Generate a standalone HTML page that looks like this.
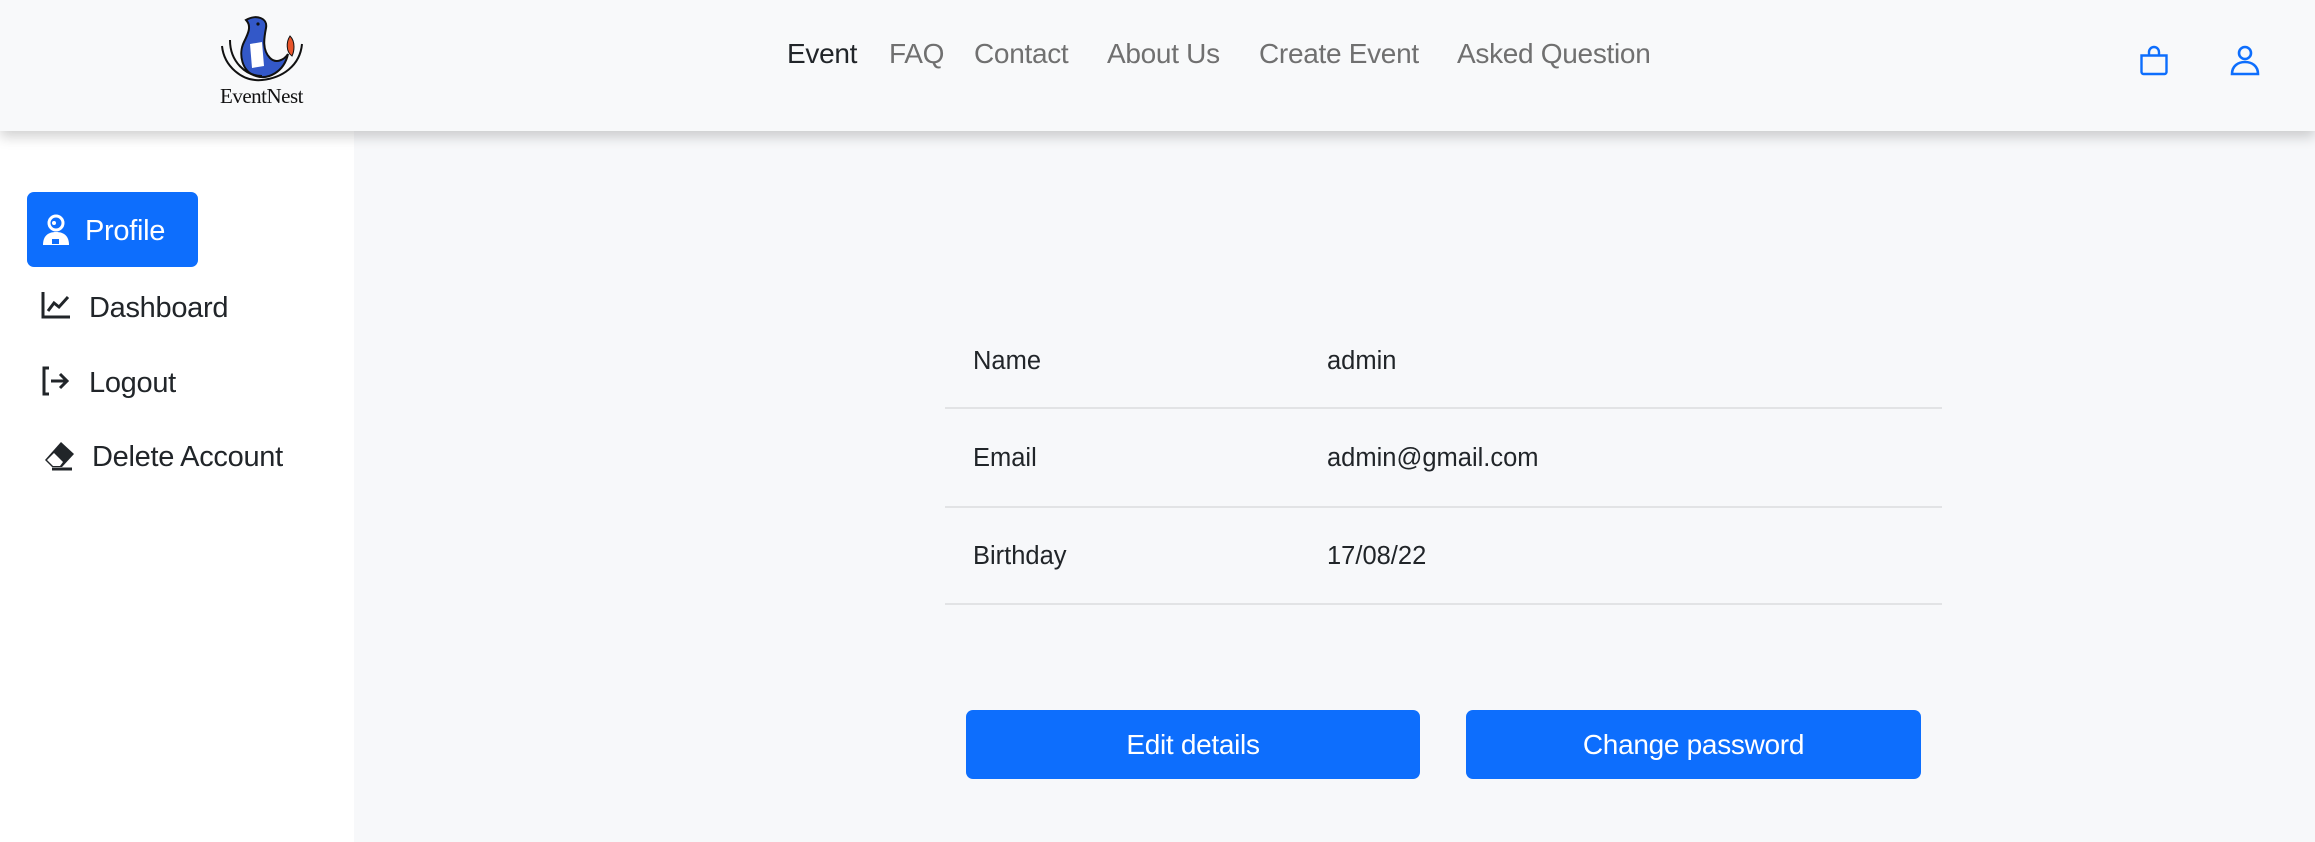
<!DOCTYPE html>
<html><head><meta charset="utf-8"><style>
*{margin:0;padding:0;box-sizing:border-box}
body{width:2315px;height:842px;overflow:hidden;background:#f7f8fa;font-family:"Liberation Sans",sans-serif;position:relative}
.hdr{position:absolute;left:0;top:0;width:2315px;height:131px;background:#f8f9fa;box-shadow:0 6px 12px rgba(0,0,0,.18);z-index:2}
.side{position:absolute;left:0;top:131px;width:354px;height:711px;background:#fff}
.a{position:absolute;white-space:nowrap}
.nav{font-size:28px;color:#707070;top:38px;letter-spacing:-0.3px}
.sl{font-size:29px;color:#212529;letter-spacing:-0.3px}
.td{font-size:25.5px;color:#212529}
.line{position:absolute;left:945px;width:997px;height:2px;background:#e2e3e5}
.btn{position:absolute;top:710px;height:69px;background:#0d6efd;border-radius:7px;color:#fff;font-size:28px;display:flex;align-items:center;justify-content:center;letter-spacing:-0.3px}
</style></head><body>
<div class="hdr">
<svg class="a" style="left:218px;top:14px" width="88" height="72" viewBox="0 0 88 72">
<path d="M28 6 C38 0 50 4 48 14 C46 24 44 36 52 44 C58 50 66 46 70 40 C66 58 50 66 38 62 C24 58 20 40 26 28 C30 20 34 12 28 6Z" fill="#3358c8" stroke="#111" stroke-width="2"/>
<path d="M32 30 L44 28 L46 52 L34 54Z" fill="#fff"/>
<circle cx="40" cy="10" r="1.6" fill="#111"/>
<path d="M72 22 C78 28 76 38 74 42 C68 38 68 28 72 22Z" fill="#e8542a" stroke="#111" stroke-width="1"/>
<path d="M4 32 C6 52 24 68 44 66 C64 64 82 52 84 30" fill="none" stroke="#111" stroke-width="2"/>
<path d="M12 26 C12 48 28 62 44 62" fill="none" stroke="#111" stroke-width="2"/>
</svg>
<div class="a" style="left:220px;top:84px;font-family:'Liberation Serif',serif;font-size:21px;color:#111;letter-spacing:-0.5px">EventNest</div>
<div class="a nav" style="left:787px;color:#212529">Event</div>
<div class="a nav" style="left:889px">FAQ</div>
<div class="a nav" style="left:974px">Contact</div>
<div class="a nav" style="left:1107px">About Us</div>
<div class="a nav" style="left:1259px">Create Event</div>
<div class="a nav" style="left:1457px">Asked Question</div>
<svg class="a" style="left:2139px;top:45px" width="30" height="31" viewBox="0 0 30 31"><path d="M10 10 V7 a5 5 0 0 1 10 0 V10 M2.5 10.5 H27.5 V27 a2 2 0 0 1 -2 2 H4.5 a2 2 0 0 1 -2 -2Z" fill="none" stroke="#0d6efd" stroke-width="2.4"/></svg>
<svg class="a" style="left:2230px;top:45px" width="30" height="31" viewBox="0 0 30 31"><circle cx="15" cy="8" r="6" fill="none" stroke="#0d6efd" stroke-width="2.6"/><path d="M2 29 C2 21 8 17 15 17 C22 17 28 21 28 29Z" fill="none" stroke="#0d6efd" stroke-width="2.6"/></svg>
</div>
<div class="side"></div>
<div class="a" style="left:27px;top:192px;width:171px;height:75px;background:#0d6efd;border-radius:7px"></div>
<svg class="a" style="left:42px;top:214px" width="28" height="32" viewBox="0 0 28 32"><circle cx="14" cy="9" r="7" fill="none" stroke="#fff" stroke-width="3"/><circle cx="12" cy="9" r="2" fill="#fff"/><path d="M1 31 C1 22 6 18 14 18 C22 18 27 22 27 31Z" fill="#fff"/><rect x="10" y="25" width="7" height="5" fill="#0d6efd"/></svg>
<div class="a sl" style="left:85px;top:215px;color:#fff">Profile</div>
<svg class="a" style="left:41px;top:291px" width="30" height="28" viewBox="0 0 30 28"><path d="M2 1 V26 H29" fill="none" stroke="#212529" stroke-width="3"/><path d="M7 20 L13 12 L18 16 L27 6" fill="none" stroke="#212529" stroke-width="3"/></svg>
<div class="a sl" style="left:89px;top:292px">Dashboard</div>
<svg class="a" style="left:41px;top:366px" width="30" height="30" viewBox="0 0 30 30"><path d="M8 2 H3 V28 H8" fill="none" stroke="#212529" stroke-width="3"/><path d="M10 15 H26 M19 8 L26 15 L19 22" fill="none" stroke="#212529" stroke-width="3"/></svg>
<div class="a sl" style="left:89px;top:367px">Logout</div>
<svg class="a" style="left:44px;top:441px" width="32" height="30" viewBox="0 0 32 30"><path d="M17 1 L30 13 L18 26 H8 L1 19Z" fill="#212529"/><path d="M3 19 L10 12 L19 21 L16 25 H9Z" fill="#fff"/><path d="M8 28 H28" stroke="#212529" stroke-width="3"/></svg>
<div class="a sl" style="left:92px;top:441px">Delete Account</div>
<div class="a td" style="left:973px;top:347px">Name</div><div class="a td" style="left:1327px;top:347px">admin</div>
<div class="line" style="top:407px"></div>
<div class="a td" style="left:973px;top:444px">Email</div><div class="a td" style="left:1327px;top:444px">admin@gmail.com</div>
<div class="line" style="top:506px"></div>
<div class="a td" style="left:973px;top:542px">Birthday</div><div class="a td" style="left:1327px;top:542px">17/08/22</div>
<div class="line" style="top:603px"></div>
<div class="btn" style="left:966px;width:454px">Edit details</div>
<div class="btn" style="left:1466px;width:455px">Change password</div>
</body></html>
